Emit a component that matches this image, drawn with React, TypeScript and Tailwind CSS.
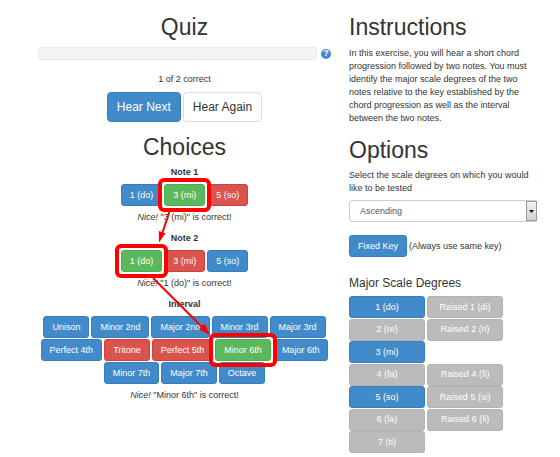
import { useState } from "react";
import { clsx } from "clsx";

type Status = "idle" | "correct" | "wrong";

interface Choice {
  label: string;
  status: Status;
}

const note1: Choice[] = [
  { label: "1 (do)", status: "idle" },
  { label: "3 (mi)", status: "correct" },
  { label: "5 (so)", status: "wrong" },
];

const note2: Choice[] = [
  { label: "1 (do)", status: "correct" },
  { label: "3 (mi)", status: "wrong" },
  { label: "5 (so)", status: "idle" },
];

const intervals: Choice[] = [
  { label: "Unison", status: "idle" },
  { label: "Minor 2nd", status: "idle" },
  { label: "Major 2nd", status: "idle" },
  { label: "Minor 3rd", status: "idle" },
  { label: "Major 3rd", status: "idle" },
  { label: "Perfect 4th", status: "idle" },
  { label: "Tritone", status: "wrong" },
  { label: "Perfect 5th", status: "wrong" },
  { label: "Minor 6th", status: "correct" },
  { label: "Major 6th", status: "idle" },
  { label: "Minor 7th", status: "idle" },
  { label: "Major 7th", status: "idle" },
  { label: "Octave", status: "idle" },
];

const degrees = [
  ["1 (do)", "Raised 1 (di)"],
  ["2 (re)", "Raised 2 (ri)"],
  ["3 (mi)", ""],
  ["4 (fa)", "Raised 4 (fi)"],
  ["5 (so)", "Raised 5 (si)"],
  ["6 (la)", "Raised 6 (li)"],
  ["7 (ti)", ""],
];

const statusClass: Record<Status, string> = {
  idle: "bg-[#428bca] border-[#357ebd]",
  correct: "bg-[#5cb85c] border-[#4cae4c]",
  wrong: "bg-[#d9534f] border-[#d43f3a]",
};

interface ChoiceGroupProps {
  title: string;
  choices: Choice[];
  answer: string;
}

const ChoiceGroup = ({ title, choices, answer }: ChoiceGroupProps) => (
  <div className="flex flex-col items-center">
    <h3 className="font-bold">{title}</h3>
    <div className="mt-[5px] flex flex-wrap justify-center gap-x-[2px] gap-y-px">
      {choices.map(({ label, status }) => (
        <div key={label} className={clsx("relative", status === "correct" && "z-10")}>
          <button
            className={clsx(
              "block h-[22px] rounded-[3px] border px-2 leading-none text-white",
              statusClass[status]
            )}
          >
            {label}
          </button>
          {status === "correct" && (
            <span className="pointer-events-none absolute -inset-1.5 rounded-md border-4 border-[#fe0000]" />
          )}
        </div>
      ))}
    </div>
    <p className="mt-[5px]">
      <em>Nice!</em> "{answer}" is correct!
    </p>
  </div>
);

// links the correct answers from one group to the next
const Arrows = () => (
  <svg
    className="pointer-events-none absolute top-[191px] left-1/2 z-20 h-[135px] w-[200px] -translate-x-1/2"
    viewBox="84 205 200 135"
    fill="#fe0000"
    stroke="#fe0000"
  >
    <path d="M169 210 L161 234" strokeWidth="2" />
    <path d="M158 242.500 L157.800 231 L164.500 233.200 Z" stroke="none" />
    <path d="M152 278 L203 329" strokeWidth="2" />
    <path d="M209 335 L197.800 329.500 L203.500 323.500 Z" stroke="none" />
  </svg>
);

const App = () => {
  const [order, setOrder] = useState("Ascending");
  const [active, setActive] = useState(["1 (do)", "3 (mi)", "5 (so)"]);

  const toggle = (degree: string) => {
    setActive(
      active.includes(degree) ? active.filter((d) => d !== degree) : [...active, degree]
    );
  };

  return (
    <main className="grid min-h-screen grid-cols-[293fr_188fr] gap-[18px] bg-white pt-[14px] pr-[23px] pl-[38px] font-['Liberation_Sans',Arial,sans-serif] text-[9px] leading-[13px] text-[#333]">
      <section className="relative flex flex-col text-center">
        <h1 className="text-[23px] leading-[26px]">Quiz</h1>
        <div className="mt-[7px] flex items-center gap-1">
          <div
            role="progressbar"
            aria-label="Progress"
            aria-valuenow={0}
            className="h-[13px] flex-1 rounded-[3px] border border-[#ebebeb] bg-[#f4f4f4]"
          />
          <button
            aria-label="Help"
            className="flex size-[10px] items-center justify-center rounded-full bg-[#428bca] text-[9px] leading-none font-bold text-white"
          >
            ?
          </button>
        </div>
        <p className="mt-[13px]">1 of 2 correct</p>
        <div className="mt-[6px] flex justify-center gap-[2px] text-[12px]">
          <button className="h-[30px] rounded-[4px] border border-[#357ebd] bg-[#428bca] px-[9px] text-white">
            Hear Next
          </button>
          <button className="h-[30px] rounded-[4px] border border-[#ddd] bg-white px-[9px]">
            Hear Again
          </button>
        </div>
        <h1 className="mt-[12px] text-[23px] leading-[26px]">Choices</h1>
        <div className="mt-[6px] flex flex-col gap-2">
          <ChoiceGroup title="Note 1" choices={note1} answer="3 (mi)" />
          <ChoiceGroup title="Note 2" choices={note2} answer="1 (do)" />
          <ChoiceGroup title="Interval" choices={intervals} answer="Minor 6th" />
        </div>
        <Arrows />
      </section>

      <section>
        <h1 className="text-[23px] leading-[26px]">Instructions</h1>
        <p className="mt-[7px]">
          In this exercise, you will hear a short chord progression followed by two notes. You
          must identify the major scale degrees of the two notes relative to the key established
          by the chord progression as well as the interval between the two notes.
        </p>
        <h1 className="mt-[12px] text-[23px] leading-[26px]">Options</h1>
        <label htmlFor="order" className="mt-[6px] block">
          Select the scale degrees on which you would like to be tested
        </label>
        <div className="relative mt-[5px]">
          <select
            id="order"
            value={order}
            onChange={(e) => setOrder(e.target.value)}
            className="block h-[22px] w-full appearance-none rounded-[3px] border border-[#ccc] bg-white pl-[10px] text-[#555]"
          >
            <option>Ascending</option>
            <option>Descending</option>
            <option>Harmonic</option>
          </select>
          <span className="pointer-events-none absolute inset-y-px right-0 flex w-[11px] items-center justify-center border border-[#999] bg-linear-to-b from-[#f2f2f2] to-[#d0d0d0]">
            <svg viewBox="0 0 5 3" className="h-[3px] w-[5px]">
              <path d="M0 0 H5 L2.500 3 Z" fill="#111" />
            </svg>
          </span>
        </div>
        <div className="mt-[13px] flex items-center gap-[2px]">
          <button className="h-[22px] rounded-[3px] border border-[#357ebd] bg-[#428bca] px-2 text-white">
            Fixed Key
          </button>
          <span>(Always use same key)</span>
        </div>
        <h2 className="mt-[19px] text-[12px] leading-[14px]">Major Scale Degrees</h2>
        <div className="mt-[6px] grid h-[157px] w-[82%] grid-cols-2 content-between gap-x-[2px]">
          {degrees.flat().map((degree, i) =>
            degree ? (
              <button
                key={degree}
                onClick={() => toggle(degree)}
                className={clsx(
                  "h-[22px] rounded-[3px] border text-white",
                  active.includes(degree)
                    ? "border-[#357ebd] bg-[#428bca]"
                    : "border-[#b3b3b3] bg-[#bbb]"
                )}
              >
                {degree}
              </button>
            ) : (
              <span key={i} />
            )
          )}
        </div>
      </section>
    </main>
  );
};

export default App;
